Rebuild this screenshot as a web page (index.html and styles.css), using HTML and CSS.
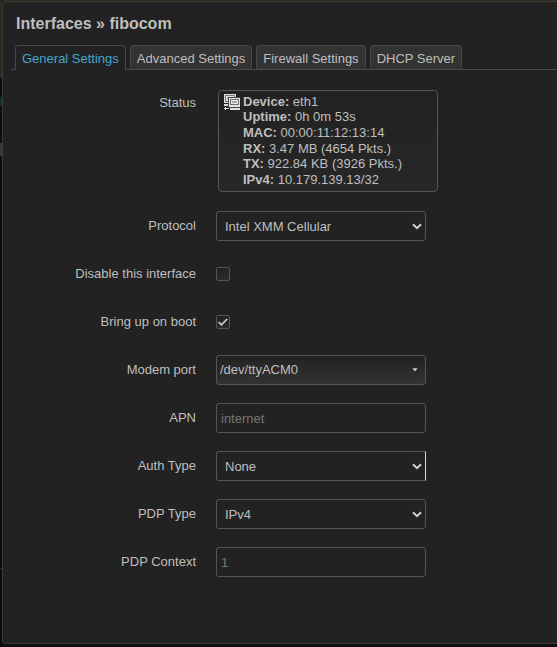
FILE: index.html
```html
<!DOCTYPE html>
<html lang="en">
<head>
<meta charset="utf-8">
<title>Interfaces</title>
<link rel="stylesheet" href="styles.css">
</head>
<body>
<main class="modal">
  <h4>Interfaces » fibocom</h4>
  <ul class="tabs">
    <li class="tab active">General Settings</li>
    <li class="tab">Advanced Settings</li>
    <li class="tab">Firewall Settings</li>
    <li class="tab">DHCP Server</li>
  </ul>
  <section class="form">
    <div class="row status-row">
      <span class="label">Status</span>
      <div class="status">
        <svg class="net" width="16" height="16" viewBox="0 0 16 16" shape-rendering="crispEdges">
          <path fill="#dedede" d="M0 0h12v9H0zM0 10h5v2H0zM0 14h5v1H0zM1 13h1v3H1zM6 14h10v2H6z"/>
          <path fill="#777" d="M1 1h10v7H1z"/>
          <path fill="#e6e6e6" d="M2 2h8v5H2z"/>
          <path fill="#aaa" d="M3 3h6v3H3z"/>
          <path fill="#444" d="M4 3h12v1H4zM4 3h1v10H4zM5 13h11v1H5z"/>
          <path fill="#e6e6e6" d="M5 4h11v9H5z"/>
          <path fill="#6f6f6f" d="M6 5h9v6H6z"/>
          <path fill="#e6e6e6" d="M7 6h7v4H7z"/>
          <path fill="#aaa" d="M8 7h5v2H8z"/>
        </svg>
        <div class="stats"><b>Device:</b> eth1<br><b>Uptime:</b> 0h 0m 53s<br><b>MAC:</b> 00:00:11:12:13:14<br><b>RX:</b> 3.47 MB (4654 Pkts.)<br><b>TX:</b> 922.84 KB (3926 Pkts.)<br><b>IPv4:</b> 10.179.139.13/32</div>
      </div>
    </div>
    <div class="row"><span class="label">Protocol</span><div class="control select"><span>Intel XMM Cellular</span><svg class="chevron" width="10" height="7" viewBox="0 0 10 7"><path d="M1 1.2 5 5.2 9 1.2"/></svg></div></div>
    <div class="row"><span class="label">Disable this interface</span><span class="check"></span></div>
    <div class="row"><span class="label">Bring up on boot</span><span class="check"><svg width="12" height="12" viewBox="0 0 12 12"><path d="M1.7 6.2 4.4 8.8 10.2 3"/></svg></span></div>
    <div class="row"><span class="label">Modem port</span><div class="control dropdown"><span>/dev/ttyACM0</span><svg class="caret" width="6" height="4" viewBox="0 0 6 4"><path d="M.4 .3h5.2L3 3.4z"/></svg></div></div>
    <div class="row"><span class="label">APN</span><div class="control input"><span>internet</span></div></div>
    <div class="row"><span class="label">Auth Type</span><div class="control select edge"><span>None</span><svg class="chevron" width="10" height="7" viewBox="0 0 10 7"><path d="M1 1.2 5 5.2 9 1.2"/></svg></div></div>
    <div class="row"><span class="label">PDP Type</span><div class="control select"><span>IPv4</span><svg class="chevron" width="10" height="7" viewBox="0 0 10 7"><path d="M1 1.2 5 5.2 9 1.2"/></svg></div></div>
    <div class="row"><span class="label">PDP Context</span><div class="control input"><span>1</span></div></div>
  </section>
</main>
</body>
</html>
```
FILE: styles.css
```css
* { box-sizing: border-box; }
body {
  margin: 0;
  height: 647px;
  padding: 1px 0 0 2px;
  overflow: hidden;
  background:
    linear-gradient(#31291b, #31291b) 0 0 / 100% 1px no-repeat,
    linear-gradient(#31291b, #31291b) 0 0 / 2px 78px no-repeat,
    linear-gradient(#12302f, #12302f) 0 97px / 2px 9px no-repeat,
    linear-gradient(#393939, #393939) 0 143px / 2px 13px no-repeat,
    linear-gradient(#063c30, #063c30) 0 568px / 2px 1px no-repeat,
    #0e0e0e;
  color: #bfbfbf;
  font: 13px/15.6px "Liberation Sans", Arial, sans-serif;
}
.modal {
  width: 570px;
  height: 643px;
  padding: 13px 0 0 8px;
  background: #222;
  border: 1px solid #3a3a3a;
  border-radius: 3px;
}
h4 { margin: 0 0 0 5px; height: 30px; font-size: 16px; line-height: 18px; }
.tabs {
  display: flex;
  gap: 4px;
  height: 25px;
  margin: 0;
  padding: 0 0 0 4px;
  list-style: none;
  border-bottom: 1px solid #484848;
}
.tab {
  height: 24px;
  padding: 0 6px;
  line-height: 25px;
  white-space: nowrap;
  background: #333;
  border: 1px solid #484848;
  border-bottom: 0;
  border-radius: 4px 4px 0 0;
}
.tab.active { height: 25px; background: #222; color: #46a5c8; }
.form { padding-top: 20px; }
.row { display: flex; height: 48px; }
.status-row { height: 121px; }
.label {
  width: 185px;
  margin-right: 20px;
  line-height: 30px;
  text-align: right;
}
.status-row .label { line-height: 25px; }
.status {
  display: flex;
  gap: 3px;
  width: 220px;
  height: 102px;
  margin-left: 2px;
  padding: 3px 5px;
  background: linear-gradient(#222, #272727);
  border: 1px solid #555;
  border-radius: 4px;
}
.net { flex: none; }
.stats { margin-top: -0.2px; }
.control {
  display: flex;
  align-items: center;
  justify-content: space-between;
  width: 210px;
  height: 30px;
  border: 1px solid #555;
  border-radius: 3px;
}
.control span { line-height: 16px; padding-top: 2px; }
.select { padding: 0 3px 0 8px; }
.edge { border-right-color: #ddd; border-radius: 3px 0 0 3px; }
.dropdown { padding: 0 7px 2px 3px; background: linear-gradient(#222, #333); }
.input { padding: 0 4px; color: #777; }
.chevron { fill: none; stroke: #ccc; stroke-width: 2; }
.caret { margin-top: 2px; fill: #ccc; }
.check {
  width: 14px;
  height: 14px;
  margin-top: 8px;
  border: 1px solid #555;
  border-radius: 2px;
  background: linear-gradient(#222, #2c2c2c);
}
.check svg { display: block; fill: none; stroke: #ccc; stroke-width: 1.7; }
```
